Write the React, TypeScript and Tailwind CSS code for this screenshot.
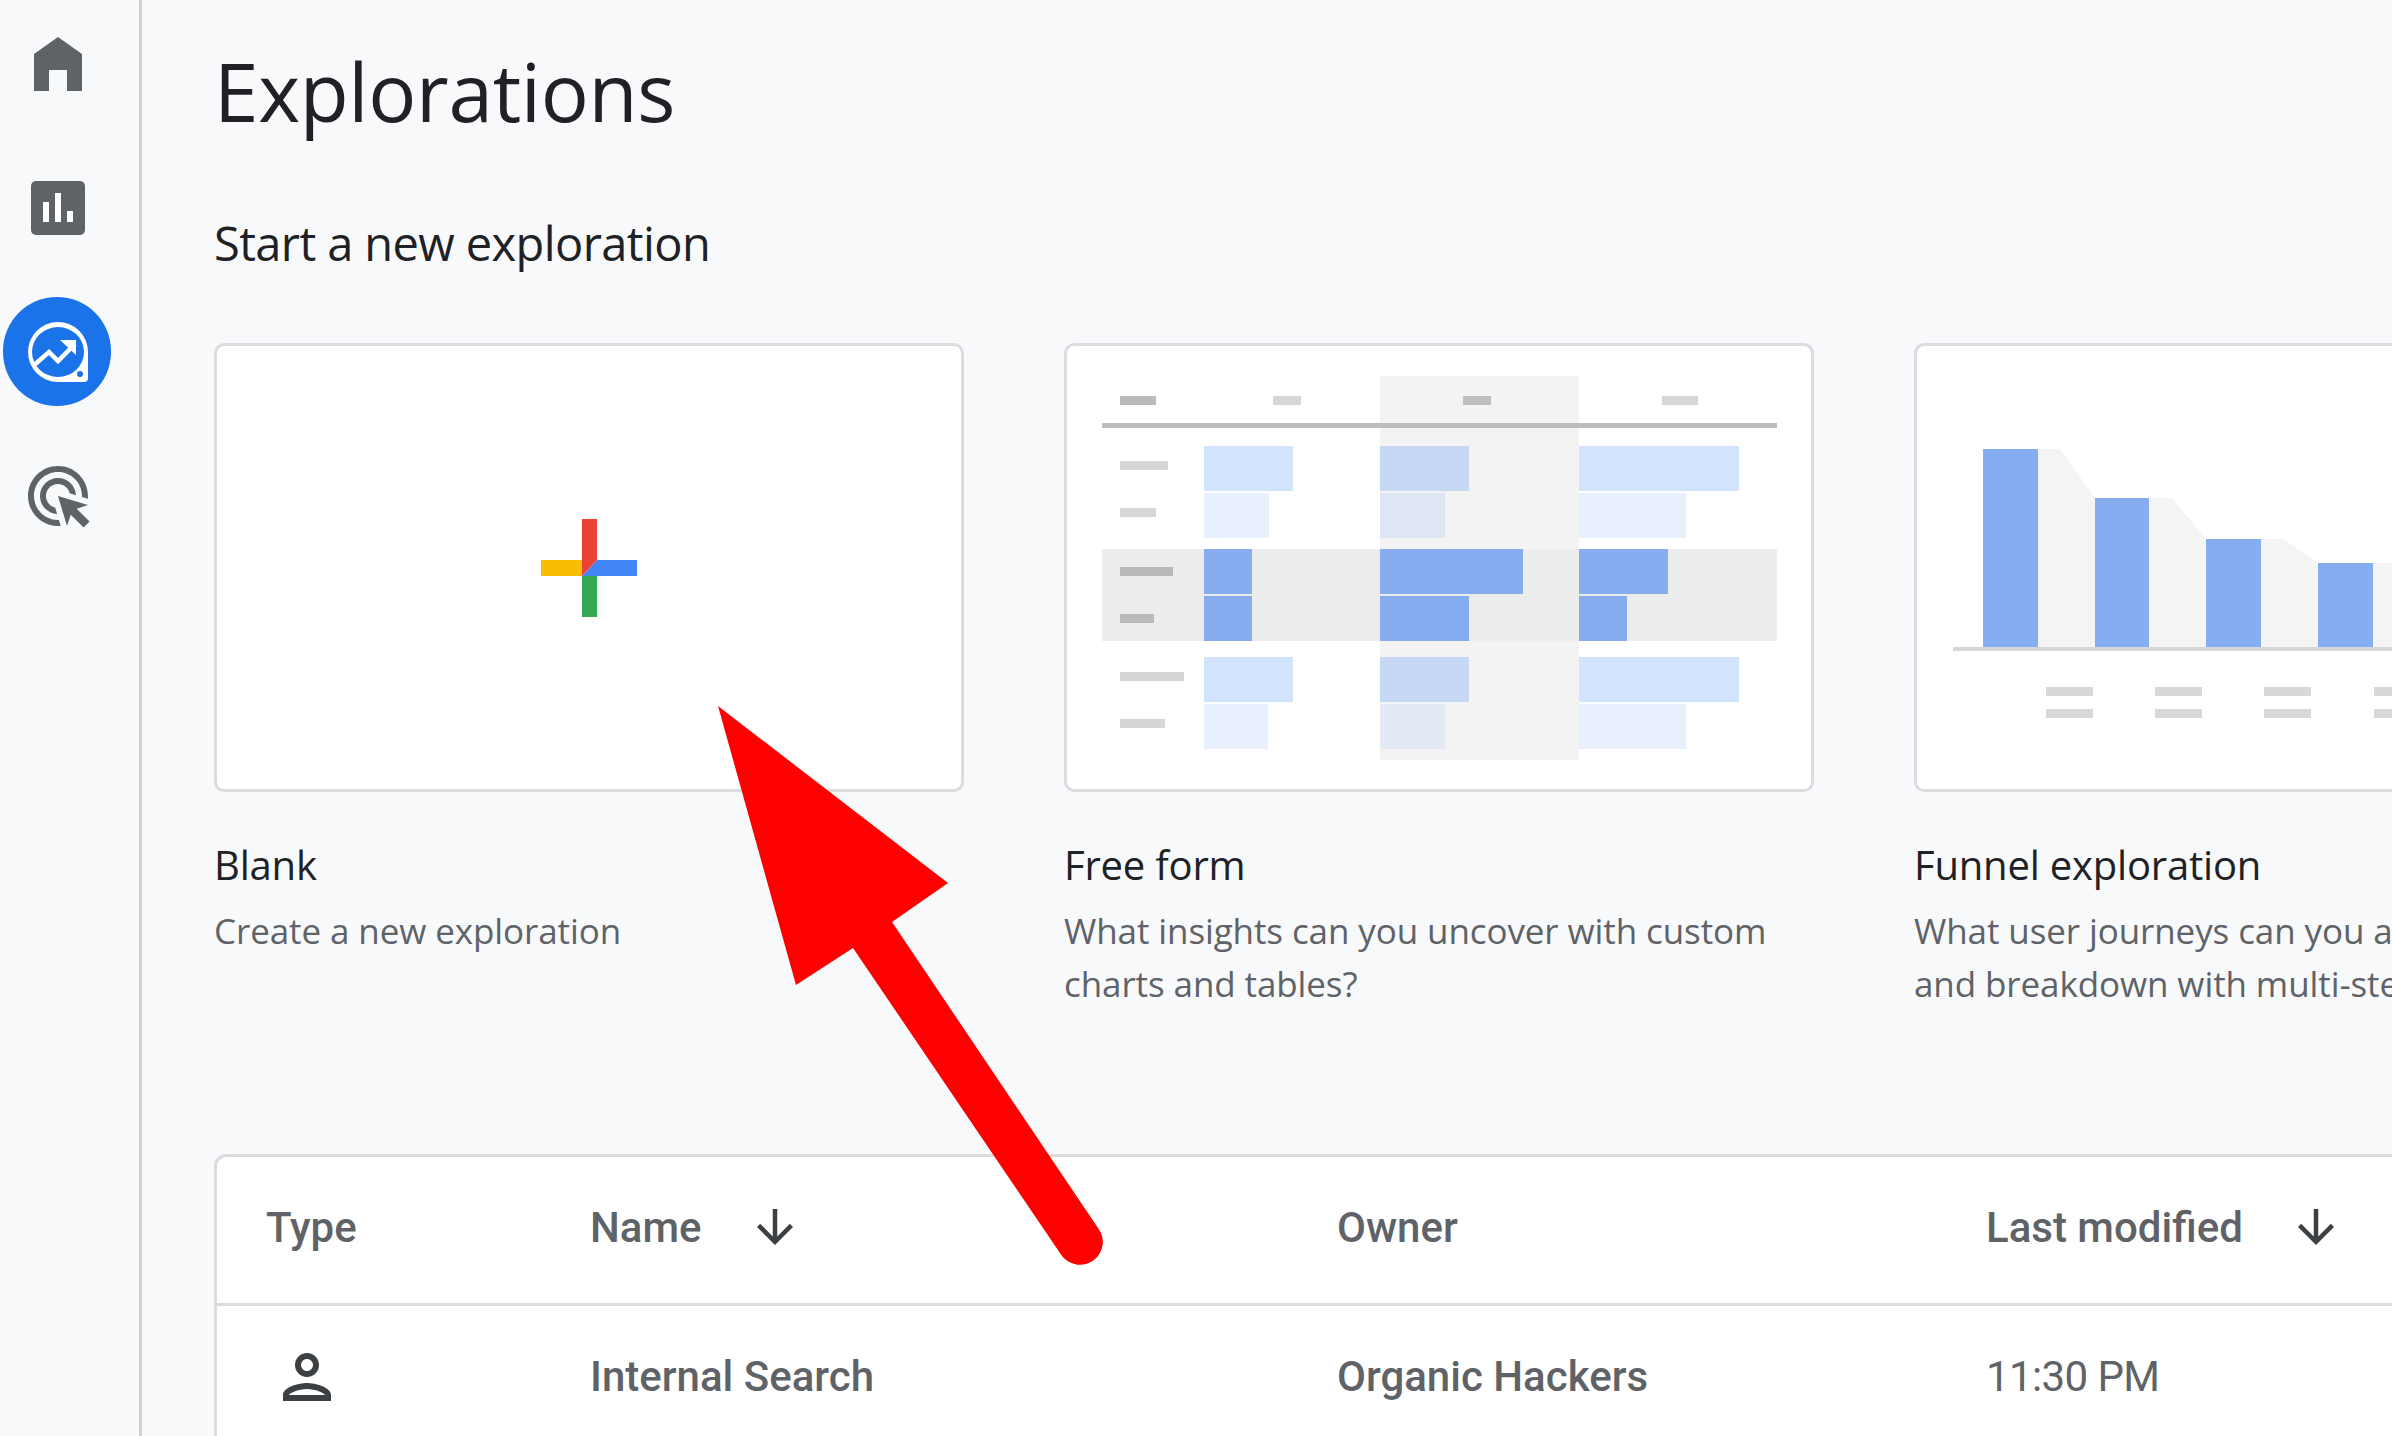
import React from "react";

const heading = { fontFamily: '"Open Sans", sans-serif' };

function Rect({ x1, x2, y1, y2, c }: { x1: number; x2: number; y1: number; y2: number; c: string }) {
  return <rect x={x1} y={y1} width={x2 - x1} height={y2 - y1} fill={c} />;
}

function PlusThumb() {
  return (
    <svg viewBox="3 3 744 443" className="block h-full w-full">
      <rect x="327" y="217" width="41" height="16" fill="#fbbc04" />
      <rect x="368" y="233" width="15" height="41" fill="#34a853" />
      <polygon points="383,217 423,217 423,233 368,233" fill="#4285f4" />
      <polygon points="368,176 383,176 383,217 368,233" fill="#ea4335" />
    </svg>
  );
}

function FreeFormThumb() {
  const light = "#d2e3fc";
  const pale = "#e8f0fe";
  const strong = "#87adf1";
  const label = "#d6d6d6";
  const dark = "#bababa";
  return (
    <svg viewBox="3 3 744 443" className="block h-full w-full">
      <Rect x1={316} x2={515} y1={33} y2={417} c="#f3f3f3" />
      <Rect x1={38} x2={713} y1={206} y2={298} c="#ededed" />
      <Rect x1={56} x2={92} y1={53} y2={62} c={dark} />
      <Rect x1={209} x2={237} y1={53} y2={62} c={label} />
      <Rect x1={399} x2={427} y1={53} y2={62} c="#bfbfbf" />
      <Rect x1={598} x2={634} y1={53} y2={62} c={label} />
      <Rect x1={38} x2={713} y1={80} y2={85} c="#bdbdbd" />

      <Rect x1={56} x2={104} y1={118} y2={127} c={label} />
      <Rect x1={140} x2={229} y1={103} y2={148} c={light} />
      <Rect x1={316} x2={405} y1={103} y2={148} c="#c6d8f3" />
      <Rect x1={515} x2={675} y1={103} y2={148} c={light} />

      <Rect x1={56} x2={92} y1={165} y2={174} c={label} />
      <Rect x1={140} x2={205} y1={150} y2={195} c={pale} />
      <Rect x1={316} x2={381} y1={150} y2={195} c="#dfe6f3" />
      <Rect x1={515} x2={622} y1={150} y2={195} c={pale} />

      <Rect x1={56} x2={109} y1={224} y2={233} c={dark} />
      <Rect x1={140} x2={188} y1={206} y2={251} c={strong} />
      <Rect x1={316} x2={459} y1={206} y2={251} c={strong} />
      <Rect x1={515} x2={604} y1={206} y2={251} c={strong} />

      <Rect x1={56} x2={90} y1={271} y2={280} c={dark} />
      <Rect x1={140} x2={188} y1={253} y2={298} c={strong} />
      <Rect x1={316} x2={405} y1={253} y2={298} c={strong} />
      <Rect x1={515} x2={563} y1={253} y2={298} c={strong} />

      <Rect x1={56} x2={120} y1={329} y2={338} c={label} />
      <Rect x1={140} x2={229} y1={314} y2={359} c={light} />
      <Rect x1={316} x2={405} y1={314} y2={359} c="#c6d8f3" />
      <Rect x1={515} x2={675} y1={314} y2={359} c={light} />

      <Rect x1={56} x2={101} y1={376} y2={385} c={label} />
      <Rect x1={140} x2={204} y1={361} y2={406} c={pale} />
      <Rect x1={316} x2={381} y1={361} y2={406} c="#e3e9f5" />
      <Rect x1={515} x2={622} y1={361} y2={406} c={pale} />
    </svg>
  );
}

function FunnelThumb() {
  const bar = "#87adf1";
  const label = "#d8d8d8";
  return (
    <svg viewBox="3 3 744 443" className="block h-full w-full">
      <polygon
        points="124,106 146,106 181,155 258,155 292,196 369,196 404,220 500,220 500,304 124,304"
        fill="#f4f4f4"
      />
      <Rect x1={69} x2={124} y1={106} y2={304} c={bar} />
      <Rect x1={181} x2={235} y1={155} y2={304} c={bar} />
      <Rect x1={292} x2={347} y1={196} y2={304} c={bar} />
      <Rect x1={404} x2={459} y1={220} y2={304} c={bar} />
      <Rect x1={39} x2={720} y1={304} y2={308} c="#d6d6d6" />
      {[132, 241, 350, 460].map((x) => (
        <g key={x}>
          <Rect x1={x} x2={x + 47} y1={344} y2={353} c={label} />
          <Rect x1={x} x2={x + 47} y1={366} y2={375} c={label} />
        </g>
      ))}
    </svg>
  );
}

function Card({ title, lines, children }: { title: string; lines: string[]; children: React.ReactNode }) {
  return (
    <div className="w-[750px] shrink-0">
      <div className="h-[449px] overflow-hidden rounded-[10px] border-[3px] border-[#dadce0] bg-white">{children}</div>
      <div className="mt-[46px] text-[40px] leading-[54px] tracking-[-0.2px] text-[#202124]" style={heading}>
        {title}
      </div>
      <div className="mt-[12px] text-[35px] leading-[53px] tracking-[-0.1px] text-[#5f6368]" style={heading}>
        {lines.map((l) => (
          <div key={l} className="whitespace-nowrap">
            {l}
          </div>
        ))}
      </div>
    </div>
  );
}

function ArrowDown() {
  return (
    <svg viewBox="0 0 24 24" className="h-[54px] w-[54px] fill-[#3c4043]">
      <path d="M20 12l-1.41-1.41L13 16.17V4h-2v12.17l-5.58-5.59L4 12l8 8 8-8z" />
    </svg>
  );
}

export default function App() {
  return (
    <div className="relative flex h-[1436px] w-[2392px] overflow-hidden bg-[#f8f9fb]">
      <aside className="flex h-full w-[142px] shrink-0 flex-col border-r-[3px] border-[#d0d1d3] pl-[4px] pt-[28px]">
        <div className="flex w-[108px] justify-center">
          <svg viewBox="22 28 72 72" className="h-[72px] w-[72px] fill-[#5f6368]">
            <polygon points="58,37 82,54 82,91 67,91 67,70 49,70 49,91 34,91 34,54" />
          </svg>
        </div>
        <div className="mt-[72px] flex w-[108px] justify-center">
          <svg viewBox="22 172 72 72" className="h-[72px] w-[72px]">
            <rect x="31" y="181" width="54" height="54" rx="5" fill="#5f6368" />
            <rect x="43" y="202" width="6" height="20" fill="#fff" />
            <rect x="55" y="193" width="6" height="29" fill="#fff" />
            <rect x="67" y="211" width="6" height="11" fill="#fff" />
          </svg>
        </div>
        <div className="-ml-[1px] mt-[53px] flex h-[109px] w-[108px] items-center justify-center rounded-full bg-[#1a73e8] pl-[2px]">
          <svg viewBox="22 316 72 72" className="h-[72px] w-[72px]">
            <path d="M58 322a30 30 0 0 1 30 30v26a4 4 0 0 1-4 4H58a30 30 0 0 1 0-60z" fill="#fff" />
            <ellipse cx="58" cy="352" rx="26" ry="25" fill="#1a73e8" />
            <path d="M33 366l16-14 9 9 17-17" fill="none" stroke="#fff" strokeWidth="4.5" />
            <path d="M60 340h16v15z" fill="#fff" />
            <circle cx="80" cy="374" r="3" fill="#1a73e8" />
          </svg>
        </div>
        <div className="mt-[54px] flex w-[108px] justify-center">
          <svg viewBox="0 0 24 24" className="h-[72px] w-[72px] fill-[#5f6368]">
            <path d="M11.71,17.99C8.53,17.84,6,15.22,6,12c0-3.31,2.69-6,6-6c3.22,0,5.84,2.53,5.99,5.71l-2.1-0.63C15.48,9.31,13.89,8,12,8 c-2.21,0-4,1.79-4,4c0,1.89,1.31,3.48,3.08,3.89L11.71,17.99z M22,12c0,0.3-0.01,0.6-0.04,0.9l-1.97-0.59C20,12.21,20,12.1,20,12 c0-4.42-3.58-8-8-8s-8,3.58-8,8s3.58,8,8,8c0.1,0,0.21,0,0.31-0.01l0.59,1.97C12.6,21.99,12.3,22,12,22C6.48,22,2,17.52,2,12 C2,6.48,6.48,2,12,2S22,6.48,22,12z M18.23,16.26L22,15l-10-3l3,10l1.26-3.77l4.27,4.27l1.98-1.98L18.23,16.26z" />
          </svg>
        </div>
      </aside>

      <main className="min-w-0 flex-1 pl-[72px]">
        <h1 className="pt-[34px] text-[80px] leading-[114px] tracking-[-0.3px] text-[#202124]" style={heading}>
          Explorations
        </h1>
        <h2 className="mt-[64px] text-[47px] leading-[62px] tracking-[-0.6px] text-[#202124]" style={heading}>
          Start a new exploration
        </h2>
        <div className="mt-[69px] flex gap-[100px]">
          <Card title="Blank" lines={["Create a new exploration"]}>
            <PlusThumb />
          </Card>
          <Card title="Free form" lines={["What insights can you uncover with custom", "charts and tables?"]}>
            <FreeFormThumb />
          </Card>
          <Card title="Funnel exploration" lines={["What user journeys can you analyze", "and breakdown with multi-step"]}>
            <FunnelThumb />
          </Card>
        </div>

        <div
          className="mt-[144px] w-[2300px] rounded-tl-[12px] border-l-[3px] border-t-[3px] border-[#dadce0] bg-white text-[42px] font-medium text-[#5f6368]"
          style={{ fontFamily: 'Roboto, sans-serif' }}
        >
          <div className="grid h-[149px] grid-cols-[324px_747px_649px_1fr] items-center border-b-[3px] border-[#dadce0] pb-[6px] pl-[49px]">
            <div>Type</div>
            <div className="flex items-center gap-[46px]">
              Name
              <ArrowDown />
            </div>
            <div>Owner</div>
            <div className="flex items-center gap-[46px]">
              Last modified
              <ArrowDown />
            </div>
          </div>
          <div className="grid h-[150px] grid-cols-[324px_747px_649px_1fr] items-center pb-[9px] pl-[49px]">
            <div className="ml-[5px]">
              <svg viewBox="0 0 24 24" className="h-[72px] w-[72px] fill-[#3c4043]">
                <path d="M12 6c1.1 0 2 .9 2 2s-.9 2-2 2-2-.9-2-2 .9-2 2-2m0 10c2.7 0 5.8 1.29 6 2H6c.23-.72 3.31-2 6-2m0-12C9.79 4 8 5.79 8 8s1.79 4 4 4 4-1.79 4-4-1.79-4-4-4zm0 10c-2.67 0-8 1.34-8 4v2h16v-2c0-2.66-5.33-4-8-4z" />
              </svg>
            </div>
            <div>Internal Search</div>
            <div>Organic Hackers</div>
            <div className="font-normal tracking-[-0.6px]">11:30 PM</div>
          </div>
        </div>
      </main>

      <svg viewBox="0 0 2392 1436" className="pointer-events-none absolute left-0 top-0 h-[1436px] w-[2392px]">
        <path
          d="M718 706L948 883L892 922L1098 1228A22 22 0 0 1 1062 1256L853 948L796 985Z"
          fill="#ff0000"
        />
      </svg>
    </div>
  );
}
